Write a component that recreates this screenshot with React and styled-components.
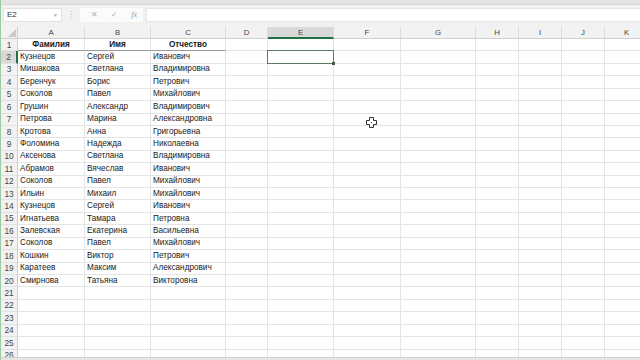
import React from "react";
import styled, { createGlobalStyle, css } from "styled-components";

const GlobalStyle = createGlobalStyle`
  html, body { margin: 0; padding: 0; background: #ffffff; overflow: hidden; }
  * { box-sizing: border-box; }
`;

const COLS = [
  { key: "", w: 17 },
  { key: "A", w: 67 },
  { key: "B", w: 66 },
  { key: "C", w: 75 },
  { key: "D", w: 42 },
  { key: "E", w: 66 },
  { key: "F", w: 67 },
  { key: "G", w: 75 },
  { key: "H", w: 43 },
  { key: "I", w: 43 },
  { key: "J", w: 43 },
  { key: "K", w: 44 },
];

const DATA = [
  ["Кузнецов", "Сергей", "Иванович"],
  ["Мишакова", "Светлана", "Владимировна"],
  ["Беренчук", "Борис", "Петрович"],
  ["Соколов", "Павел", "Михайлович"],
  ["Грушин", "Александр", "Владимирович"],
  ["Петрова", "Марина", "Александровна"],
  ["Кротова", "Анна", "Григорьевна"],
  ["Фоломина", "Надежда", "Николаевна"],
  ["Аксенова", "Светлана", "Владимировна"],
  ["Абрамов", "Вячеслав", "Иванович"],
  ["Соколов", "Павел", "Михайлович"],
  ["Ильин", "Михаил", "Михайлович"],
  ["Кузнецов", "Сергей", "Иванович"],
  ["Игнатьева", "Тамара", "Петровна"],
  ["Залевская", "Екатерина", "Васильевна"],
  ["Соколов", "Павел", "Михайлович"],
  ["Кошкин", "Виктор", "Петрович"],
  ["Каратеев", "Максим", "Александрович"],
  ["Смирнова", "Татьяна", "Викторовна"],
];

const Window = styled.div`
  position: relative;
  width: 640px;
  height: 360px;
  overflow: hidden;
  display: flex;
  flex-direction: column;
  background: #f1f1f1;
  border-left: 1px solid #9cc9a6;
  font-family: "Liberation Sans", Arial, sans-serif;
  color: #222;
`;

const TopStrip = styled.div`
  height: 5px;
  flex: none;
  background: #e4e4e4;
  border-bottom: 1px solid #d6d6d6;
`;

const FormulaBar = styled.div`
  height: 19px;
  flex: none;
  display: flex;
  align-items: center;
  padding-left: 2px;
`;

const NameBox = styled.div`
  width: 59px;
  height: 14px;
  background: #fff;
  border: 1px solid #e2e2e2;
  display: flex;
  align-items: center;
  justify-content: space-between;
  padding: 0 3px 0 3px;
  font-size: 8px;
  color: #333;
`;

const Caret = styled.span`
  font-size: 5px;
  color: #aaa;
`;

const Dots = styled.div`
  width: 18px;
  display: flex;
  flex-direction: column;
  align-items: center;
  gap: 2px;
  & > i {
    width: 1px;
    height: 1px;
    background: #c4c4c4;
  }
`;

const IconBox = styled.div`
  width: 63px;
  height: 14px;
  background: #fbfbfb;
  display: flex;
  align-items: center;
  padding-left: 6px;
  color: #b0b0b0;
  font-size: 8px;
`;

const IconSlot = styled.span`
  width: ${(p) => p.$w}px;
  text-align: center;
  ${(p) =>
    p.$fx &&
    css`
      font-family: "Liberation Serif", serif;
      font-style: italic;
      color: #999;
    `}
`;

const FormulaInput = styled.div`
  flex: 1;
  margin-left: 3px;
  height: 14px;
  background: #fff;
  border: 1px solid #e6e6e6;
  border-right: none;
`;

const Gap = styled.div`
  height: 3px;
  flex: none;
`;

const SheetArea = styled.div`
  flex: 1;
  overflow: hidden;
  background: #fff;
`;

const Grid = styled.div`
  display: grid;
  grid-template-columns: ${COLS.map((c) => c.w + "px").join(" ")};
  grid-template-rows: 12px repeat(26, 12.43px);
  width: 700px;
`;

const ColHead = styled.div`
  background: ${(p) => (p.$sel ? "#d9d9d9" : "#f2f2f2")};
  border-right: 1px solid #dcdcdc;
  border-bottom: ${(p) => (p.$sel ? "2px solid #217346" : "1px solid #cfcfcf")};
  font-size: 7.8px;
  color: #444;
  display: flex;
  align-items: center;
  justify-content: center;
`;

const Corner = styled.div`
  background: #f2f2f2;
  border-right: 1px solid #cfcfcf;
  border-bottom: 1px solid #cfcfcf;
  display: flex;
  align-items: flex-end;
  justify-content: flex-end;
  padding: 0 1px 1px 0;
`;

const Triangle = styled.div`
  width: 0;
  height: 0;
  border-left: 8px solid transparent;
  border-bottom: 8px solid #c9c9c9;
`;

const RowHead = styled.div`
  background: ${(p) => (p.$sel ? "#d9d9d9" : "#f2f2f2")};
  border-right: ${(p) => (p.$sel ? "2px solid #217346" : "1px solid #cfcfcf")};
  border-bottom: 1px solid #e2e2e2;
  font-size: 8.3px;
  color: #444;
  display: flex;
  align-items: center;
  justify-content: center;
  line-height: 1;
`;

const Cell = styled.div`
  position: relative;
  border-right: 1px solid #e4e4e4;
  border-bottom: ${(p) => (p.$under ? "1px solid #9a9a9a" : "1px solid #e4e4e4")};
  font-size: 8.2px;
  line-height: 1;
  color: #1a1a1a;
  white-space: nowrap;
  display: flex;
  align-items: center;
  justify-content: ${(p) => (p.$center ? "center" : "flex-start")};
  padding-left: ${(p) => (p.$center ? 0 : 2)}px;
  font-weight: ${(p) => (p.$bold ? 700 : 400)};
  ${(p) =>
    p.$active &&
    css`
      &::after {
        content: "";
        position: absolute;
        left: -1px;
        top: -1px;
        right: -1px;
        bottom: -1px;
        border: 1px solid #5a7a62;
      }
      &::before {
        content: "";
        position: absolute;
        right: -2px;
        bottom: -2px;
        width: 3px;
        height: 3px;
        background: #3b5a44;
        z-index: 2;
      }
    `}
`;

const BottomBar = styled.div`
  height: 3px;
  flex: none;
  background: #e6e6e6;
  border-top: 1px solid #d2d2d2;
`;

const Cursor = styled.div`
  position: absolute;
  left: 365px;
  top: 114px;
  width: 11px;
  height: 11px;
`;

function CrossCursor() {
  return (
    <Cursor>
      <svg width="11" height="11" viewBox="0 0 11 11">
        <path
          d="M3.5 0.5h4v3h3v4h-3v3h-4v-3h-3v-4h3z"
          fill="#fff"
          stroke="#333"
          strokeWidth="1"
        />
        <rect x="5" y="5" width="1" height="1" fill="#333" />
      </svg>
    </Cursor>
  );
}

export default function App() {
  const header = ["Фамилия", "Имя", "Отчество"];
  const rows = [];
  for (let r = 1; r <= 26; r++) {
    const cells = [];
    const data = r === 1 ? header : DATA[r - 2];
    for (let c = 1; c < COLS.length; c++) {
      const text = data && c <= 3 ? data[c - 1] : "";
      cells.push(
        <Cell
          key={c}
          $bold={r === 1}
          $center={r === 1}
          $under={r === 1 && c <= 3}
          $active={r === 2 && c === 5}
        >
          {text}
        </Cell>
      );
    }
    rows.push(
      <React.Fragment key={r}>
        <RowHead $sel={r === 2}>{r}</RowHead>
        {cells}
      </React.Fragment>
    );
  }

  return (
    <>
      <GlobalStyle />
      <Window>
        <TopStrip />
        <FormulaBar>
          <NameBox>
            <span>E2</span>
            <Caret>▼</Caret>
          </NameBox>
          <Dots>
            <i />
            <i />
            <i />
          </Dots>
          <IconBox>
            <IconSlot $w={18}>✕</IconSlot>
            <IconSlot $w={22}>✓</IconSlot>
            <IconSlot $w={18} $fx>
              fx
            </IconSlot>
          </IconBox>
          <FormulaInput />
        </FormulaBar>
        <Gap />
        <SheetArea>
          <Grid>
            <Corner>
              <Triangle />
            </Corner>
            {COLS.slice(1).map((c) => (
              <ColHead key={c.key} $sel={c.key === "E"}>
                {c.key}
              </ColHead>
            ))}
            {rows}
          </Grid>
        </SheetArea>
        <BottomBar />
        <CrossCursor />
      </Window>
    </>
  );
}
